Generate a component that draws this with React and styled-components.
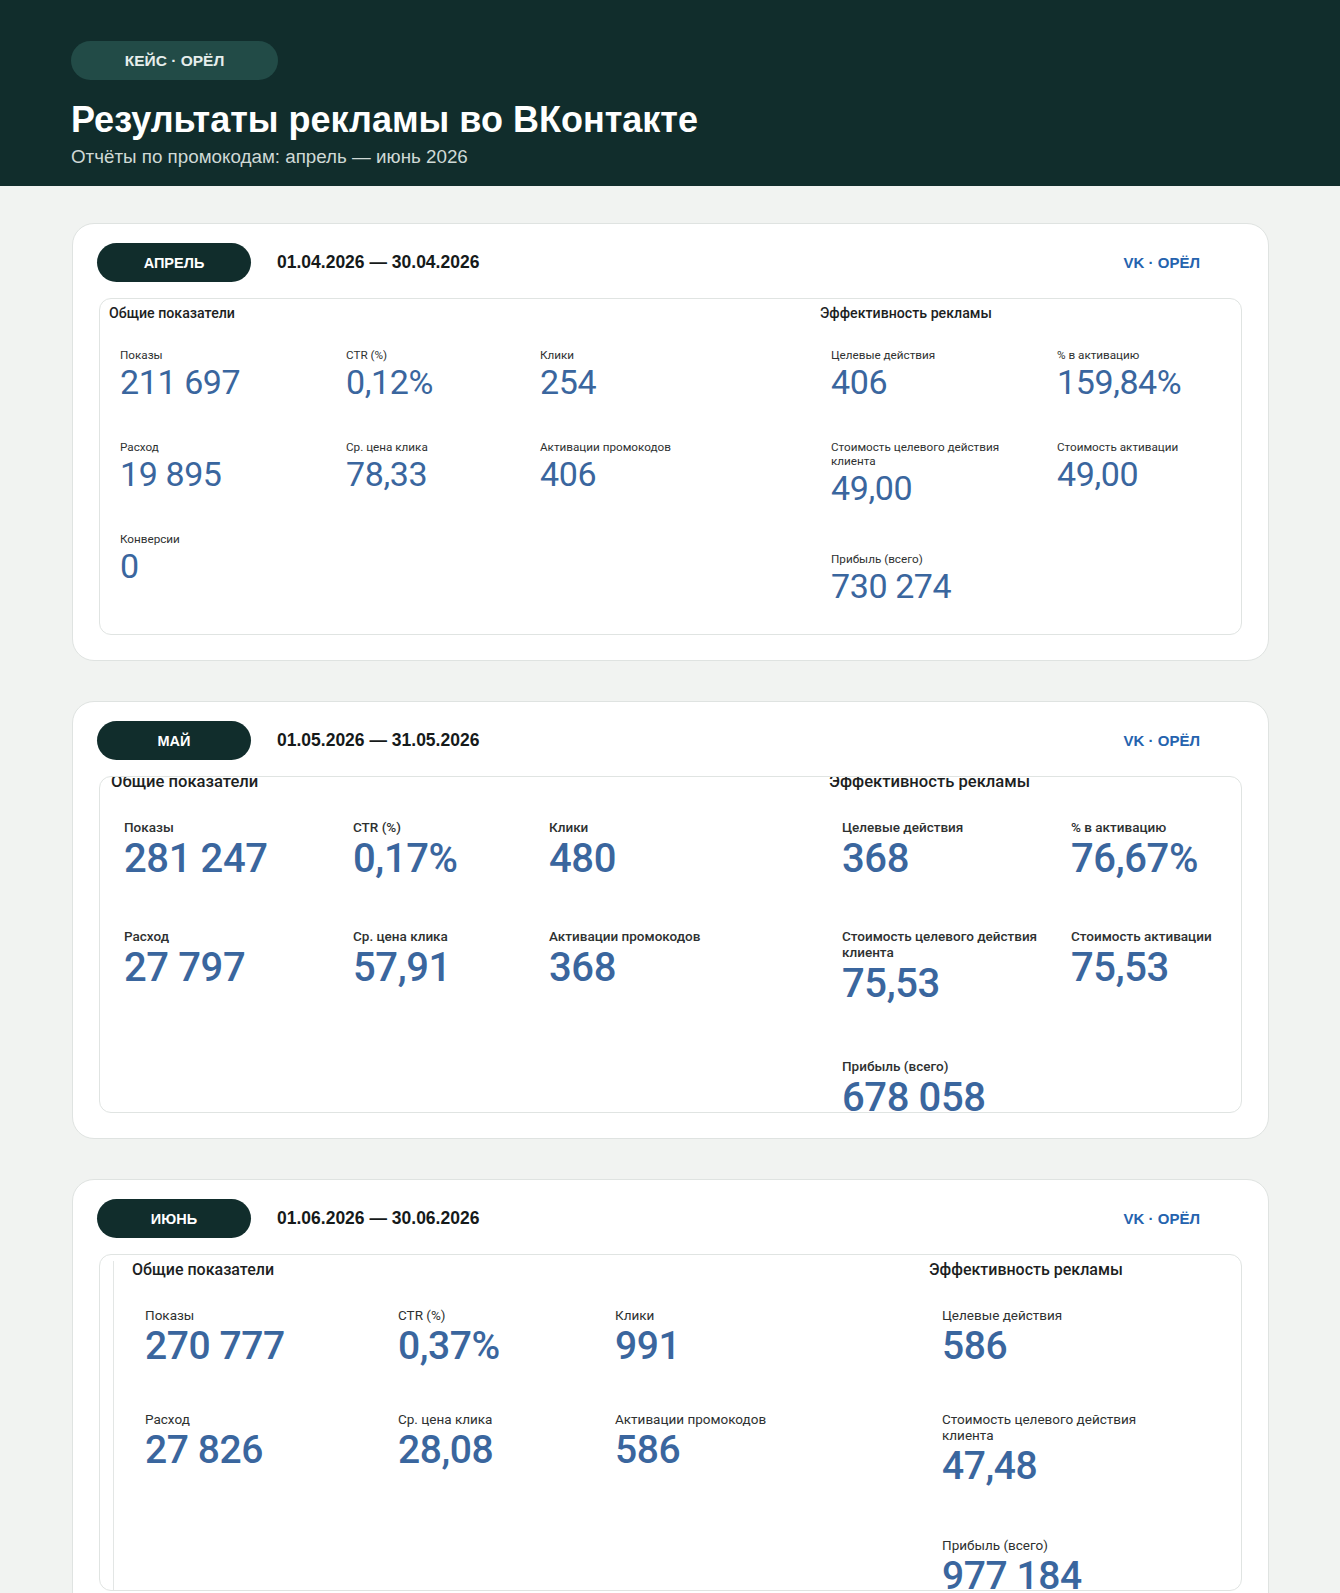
import React from 'react'
import styled, { createGlobalStyle } from 'styled-components'

const GlobalStyle = createGlobalStyle`
  * { box-sizing: border-box; }
  body {
    margin: 0;
    background: #f1f3f1;
    font-family: "Liberation Sans", Arial, sans-serif;
  }
`

const Hero = styled.header`
  background: #112d2c;
  padding: 41px 71px 19px;
`,
  Tag = styled.div`
  display: flex;
  align-items: center;
  justify-content: center;
  width: 207px;
  height: 39px;
  border-radius: 20px;
  background: #224b47;
  color: #e6eeec;
  font-weight: 700;
  font-size: 15.5px;
`,
  Title = styled.h1`
  margin: 19px 0 0;
  font-size: 36px;
  line-height: 41px;
  font-weight: 700;
  color: #fff;
`,
  Subtitle = styled.p`
  margin: 6px 0 0;
  font-size: 18.8px;
  line-height: 21px;
  color: #cfd9d6;
`,
  Main = styled.main`
  padding: 37px 71px 40px 72px;
  display: flex;
  flex-direction: column;
  gap: 40px;
`,
  Card = styled.section`
  background: #fff;
  border: 1px solid #dfe3e1;
  border-radius: 22px;
  padding: 19px 26px 25px 26px;
`,
  CardHead = styled.div`
  display: flex;
  align-items: center;
  height: 39px;
  margin-left: -2px;
`,
  MonthPill = styled.div`
  width: 154px;
  height: 39px;
  border-radius: 20px;
  background: #112d2c;
  color: #fff;
  display: flex;
  align-items: center;
  justify-content: center;
  font-weight: 700;
  font-size: 14.5px;
`,
  Period = styled.div`
  margin-left: 26px;
  font-weight: 700;
  font-size: 17.5px;
  color: #161a1a;
`,
  Source = styled.div`
  margin-left: auto;
  margin-right: 42px;
  font-weight: 700;
  font-size: 15px;
  color: #2563ae;
`,
  ReportFrame = styled.div`
  margin-top: 16px;
  height: 337px;
  border: 1px solid #e0e4e2;
  border-radius: 12px;
  overflow: hidden;
  display: flex;
`,
  ReportBody = styled.div`
  flex: 1;
  display: flex;
  align-items: flex-start;
  margin-top: ${p => p.$top}px;
  padding-left: ${p => p.$pl}px;
  ${p => p.$edge && 'margin-left: 13px; border-left: 1px solid #e3e6e5;'}
`,
  Section = styled.div`
  flex: ${p => p.$w ? 'none' : 1};
  width: ${p => p.$w ? `${p.$w}px` : 'auto'};
`,
  SectionTitle = styled.div`
  font-family: Roboto, "Noto Sans", sans-serif;
  font-weight: 500;
  font-size: ${p => p.$size}px;
  line-height: ${p => p.$lh}px;
  color: #1d1f1f;
  white-space: nowrap;
`,
  Grid = styled.div`
  display: grid;
  grid-template-columns: ${p => p.$cols};
  row-gap: ${p => p.$gap}px;
  margin-top: ${p => p.$mt}px;
  padding-left: ${p => p.$indent}px;
`,
  Metric = styled.div`
  margin-top: ${p => p.$push}px;
`,
  Label = styled.div`
  font-family: Roboto, "Noto Sans", sans-serif;
  font-size: ${p => p.$size}px;
  line-height: ${p => p.$lh}px;
  font-weight: ${p => p.$weight};
  color: #2e3131;
  white-space: pre-line;
`,
  Value = styled.div`
  font-family: Roboto, "Noto Sans", sans-serif;
  font-size: ${p => p.$size}px;
  line-height: ${p => p.$lh}px;
  font-weight: ${p => p.$weight};
  color: #3a669e;
  letter-spacing: -0.4px;
  white-space: nowrap;
`

const months = [
  {
    name  : 'АПРЕЛЬ',
    period: '01.04.2026 — 30.04.2026',
    look  : {
      top: 5.5, pl: 9, edge: false, leftW: 711, head: [14.2, 17], mt: 26.5, indent: 11,
      leftCols: '226px 194px auto', rightCols: '226px auto',
      label: [11.7, 14, 400], value: [34, 40, 400], gap: 38, push: 6
    },
    general: [
      ['Показы', '211 697'], ['CTR (%)', '0,12%'], ['Клики', '254'],
      ['Расход', '19 895'], ['Ср. цена клика', '78,33'], ['Активации промокодов', '406'],
      ['Конверсии', '0']
    ],
    efficiency: [
      ['Целевые действия', '406'], ['% в активацию', '159,84%'],
      ['Стоимость целевого действия\nклиента', '49,00'], ['Стоимость активации', '49,00'],
      ['Прибыль (всего)', '730 274', true]
    ]
  },
  {
    name  : 'МАЙ',
    period: '01.05.2026 — 31.05.2026',
    look  : {
      top: -5.5, pl: 11, edge: false, leftW: 718, head: [16.6, 19], mt: 28, indent: 13,
      leftCols: '229px 196px auto', rightCols: '229px auto',
      label: [13.5, 16, 500], value: [40, 47, 500], gap: 46, push: 5
    },
    general: [
      ['Показы', '281 247'], ['CTR (%)', '0,17%'], ['Клики', '480'],
      ['Расход', '27 797'], ['Ср. цена клика', '57,91'], ['Активации промокодов', '368']
    ],
    efficiency: [
      ['Целевые действия', '368'], ['% в активацию', '76,67%'],
      ['Стоимость целевого действия\nклиента', '75,53'], ['Стоимость активации', '75,53'],
      ['Прибыль (всего)', '678 058', true]
    ]
  },
  {
    name  : 'ИЮНЬ',
    period: '01.06.2026 — 30.06.2026',
    look  : {
      top: 6, pl: 18, edge: true, leftW: 797, head: [16, 18], mt: 28, indent: 13,
      leftCols: '253px 217px auto', rightCols: 'auto',
      label: [13.5, 16, 400], value: [39, 46, 500], gap: 42, push: 6
    },
    general: [
      ['Показы', '270 777'], ['CTR (%)', '0,37%'], ['Клики', '991'],
      ['Расход', '27 826'], ['Ср. цена клика', '28,08'], ['Активации промокодов', '586']
    ],
    efficiency: [
      ['Целевые действия', '586'],
      ['Стоимость целевого действия\nклиента', '47,48'],
      ['Прибыль (всего)', '977 184', true]
    ]
  }
]

const MetricGrid = ({ items, look, cols }) => (
  <Grid $cols={cols} $gap={look.gap} $mt={look.mt} $indent={look.indent}>
    {items.map(([label, value, last]) => (
      <Metric key={label} $push={last ? look.push : 0}>
        <Label $size={look.label[0]} $lh={look.label[1]} $weight={look.label[2]}>{label}</Label>
        <Value $size={look.value[0]} $lh={look.value[1]} $weight={look.value[2]}>{value}</Value>
      </Metric>
    ))}
  </Grid>
)

const MonthCard = ({ month }) => {
  const { look } = month
  return (
    <Card>
      <CardHead>
        <MonthPill>{month.name}</MonthPill>
        <Period>{month.period}</Period>
        <Source>VK · ОРЁЛ</Source>
      </CardHead>
      <ReportFrame>
        <ReportBody $top={look.top} $pl={look.pl} $edge={look.edge}>
          <Section $w={look.leftW}>
            <SectionTitle $size={look.head[0]} $lh={look.head[1]}>Общие показатели</SectionTitle>
            <MetricGrid items={month.general} look={look} cols={look.leftCols} />
          </Section>
          <Section>
            <SectionTitle $size={look.head[0]} $lh={look.head[1]}>Эффективность рекламы</SectionTitle>
            <MetricGrid items={month.efficiency} look={look} cols={look.rightCols} />
          </Section>
        </ReportBody>
      </ReportFrame>
    </Card>
  )
}

export default function App () {
  return (
    <>
      <GlobalStyle />
      <Hero>
        <Tag>КЕЙС · ОРЁЛ</Tag>
        <Title>Результаты рекламы во ВКонтакте</Title>
        <Subtitle>Отчёты по промокодам: апрель — июнь 2026</Subtitle>
      </Hero>
      <Main>
        {months.map(m => <MonthCard key={m.name} month={m} />)}
      </Main>
    </>
  )
}
